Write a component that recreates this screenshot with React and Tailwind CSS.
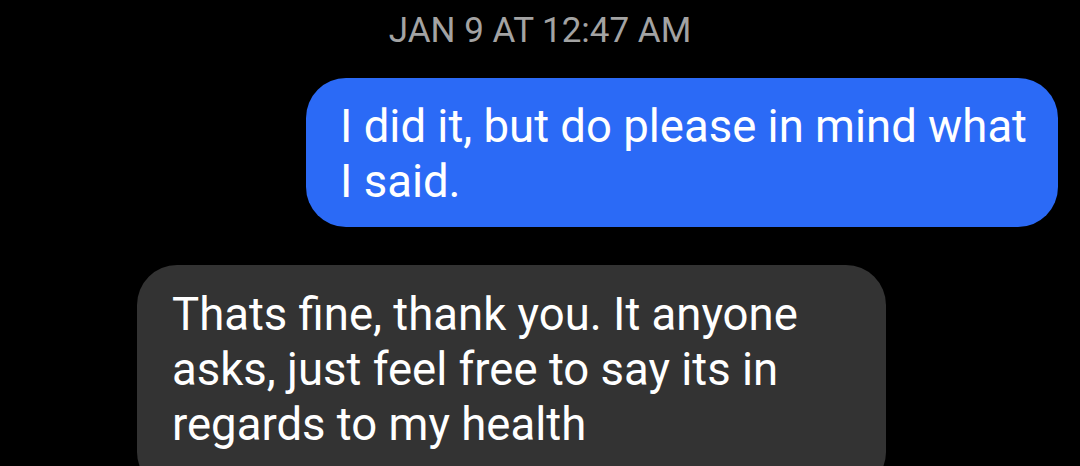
import React from 'react';

export default function App() {
  return (
    <div className="w-[1080px] h-[466px] overflow-hidden bg-black font-[Roboto,sans-serif]">
      {/* Timestamp */}
      <div className="pt-[11px] text-center text-[35px] leading-[40px] text-[#a3a3a3]">
        JAN 9 AT 12:47 AM
      </div>

      {/* Sent */}
      <div className="mt-[27px] flex justify-end pr-[22px]">
        <div className="w-[752px] rounded-[40px] bg-[#2b6af6] pl-[34px] pr-[20px] pt-[21px] pb-[18px] text-[45.5px] leading-[55px] text-white">
          <div className="whitespace-nowrap">I did it, but do please in mind what</div>
          <div className="whitespace-nowrap">I said.</div>
        </div>
      </div>

      {/* Received */}
      <div className="mt-[38px] flex pl-[137px]">
        <div className="w-[749px] rounded-[40px] bg-[#333333] pl-[35px] pr-[20px] pt-[22px] pb-[40px] text-[45.5px] leading-[55px] text-white">
          <div className="whitespace-nowrap">Thats fine, thank you. It anyone</div>
          <div className="whitespace-nowrap">asks, just feel free to say its in</div>
          <div className="whitespace-nowrap">regards to my health</div>
        </div>
      </div>
    </div>
  );
}
